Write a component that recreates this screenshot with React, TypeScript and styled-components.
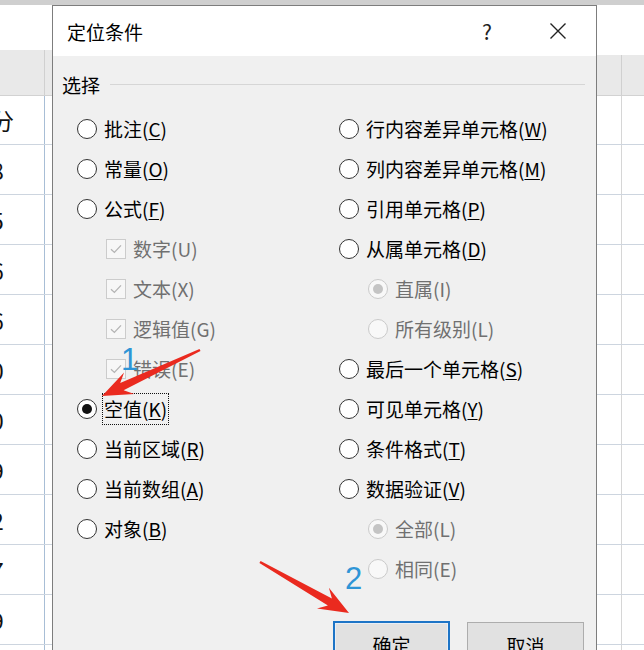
import React from 'react';
import styled, { createGlobalStyle } from 'styled-components';

const GlobalStyle = createGlobalStyle`
  html, body {
    margin: 0;
    padding: 0;
    background: #fff;
    overflow: hidden;
  }
  body {
    font-family: "Noto Sans CJK SC", "Noto Sans", sans-serif;
  }
`;

const Page = styled.div`
  position: relative;
  width: 644px;
  height: 650px;
  display: flex;
  flex-direction: column;
  overflow: hidden;
  background: #fff;
`;

const TopBar = styled.div`
  height: 5px;
  flex-shrink: 0;
  background: #cfcfcf;
`;

const Main = styled.div`
  flex: 1;
  display: flex;
  min-height: 0;
`;

/* ---------- spreadsheet strips ---------- */

const Sheet = styled.div<{ $width?: number }>`
  width: ${({ $width }) => ($width ? `${$width}px` : 'auto')};
  flex: ${({ $width }) => ($width ? '0 0 auto' : '1')};
  display: flex;
  flex-direction: column;
  overflow: hidden;
`;

const SheetBlank = styled.div<{ $h: number }>`
  height: ${({ $h }) => $h}px;
  flex-shrink: 0;
  background: #fff;
`;

const SheetRow = styled.div<{ $header?: boolean; $h: number }>`
  height: ${({ $h }) => $h}px;
  flex-shrink: 0;
  display: flex;
  background: ${({ $header }) => ($header ? '#e9e9e9' : '#fff')};
  border-bottom: 1px solid ${({ $header }) => ($header ? '#d2d2d2' : '#cdd5df')};
`;

const Cell = styled.div<{ $w?: number; $line?: string }>`
  width: ${({ $w }) => ($w ? `${$w}px` : 'auto')};
  flex: ${({ $w }) => ($w ? '0 0 auto' : '1')};
  border-right: ${({ $line }) => ($line ? `1px solid ${$line}` : 'none')};
  display: flex;
  align-items: center;
  overflow: hidden;
  font-family: "Noto Sans CJK SC", "Liberation Sans", sans-serif;
  font-size: 23px;
  color: #111;
`;

const CellText = styled.span`
  margin-left: -9px;
  white-space: nowrap;
`;

/* ---------- dialog ---------- */

const Dialog = styled.div`
  width: 545px;
  flex-shrink: 0;
  display: flex;
  flex-direction: column;
  box-sizing: border-box;
  border: 1px solid #7d7d7d;
  border-bottom: none;
  background: #f0f0f0;
  color: #000;
`;

const TitleBar = styled.div`
  height: 50px;
  flex-shrink: 0;
  display: flex;
  align-items: center;
  background: #fff;
  padding: 0 15px 0 14px;
`;

const Title = styled.div`
  flex: 1;
  font-size: 19px;
`;

const TitleButton = styled.div`
  width: 46px;
  height: 36px;
  display: flex;
  align-items: center;
  justify-content: center;
  font-size: 21px;
  color: #222;
  & + & {
    margin-left: 25px;
  }
`;

const Body = styled.div`
  flex: 1;
  display: flex;
  flex-direction: column;
  padding: 0 11px 0 9px;
`;

const GroupHeader = styled.div`
  height: 50px;
  padding-top: 3px;
  display: flex;
  align-items: center;
  gap: 10px;
  font-size: 19px;
`;

const GroupLine = styled.div`
  flex: 1;
  height: 1px;
  background: #d6d6d6;
`;

const Columns = styled.div`
  display: grid;
  grid-template-columns: 262px 1fr;
  padding-left: 15px;
`;

const OptionColumn = styled.div`
  display: flex;
  flex-direction: column;
`;

const OptionRow = styled.div<{ $sub?: boolean; $disabled?: boolean }>`
  height: 40px;
  display: flex;
  align-items: center;
  gap: 7px;
  padding-left: ${({ $sub }) => ($sub ? 29 : 0)}px;
  font-size: 19px;
  color: ${({ $disabled }) => ($disabled ? '#707070' : '#000')};
  white-space: nowrap;
`;

const Label = styled.span<{ $focused?: boolean }>`
  line-height: 28px;
  outline: ${({ $focused }) => ($focused ? '1px dotted #111' : 'none')};
  outline-offset: 1px;
`;

const Key = styled.span<{ $underline?: boolean }>`
  text-decoration: ${({ $underline }) => ($underline ? 'underline' : 'none')};
  text-underline-offset: 2px;
  text-decoration-thickness: 1px;
`;

const RadioCircle = styled.span<{ $checked?: boolean; $disabled?: boolean }>`
  width: 20px;
  height: 20px;
  box-sizing: border-box;
  flex-shrink: 0;
  border-radius: 50%;
  border: 1.5px solid ${({ $disabled }) => ($disabled ? '#cacaca' : '#333')};
  background: ${({ $disabled }) => ($disabled ? '#f8f8f8' : '#fff')};
  display: grid;
  place-items: center;

  &::after {
    content: '';
    width: 10px;
    height: 10px;
    border-radius: 50%;
    background: ${({ $disabled }) => ($disabled ? '#c4c4c4' : '#111')};
    display: ${({ $checked }) => ($checked ? 'block' : 'none')};
  }
`;

const CheckBox = styled.span`
  width: 20px;
  height: 20px;
  box-sizing: border-box;
  flex-shrink: 0;
  border: 1px solid #cccccc;
  background: #f7f7f7;
  display: grid;
  place-items: center;
  color: #b4b4b4;
`;

const ButtonRow = styled.div`
  display: flex;
  justify-content: flex-end;
  gap: 17px;
  margin-top: 32px;
  padding-right: 1px;
`;

const Button = styled.div<{ $primary?: boolean }>`
  width: 117px;
  height: 46px;
  box-sizing: border-box;
  display: flex;
  align-items: center;
  justify-content: center;
  font-size: 19px;
  background: #e1e1e1;
  border: ${({ $primary }) => ($primary ? '2px solid #1d74c6' : '1px solid #adadad')};
  box-shadow: ${({ $primary }) => ($primary ? 'inset 0 0 0 1px #e8eef5' : 'none')};
  margin-top: ${({ $primary }) => ($primary ? 0 : 1)}px;
`;

/* ---------- annotations ---------- */

const Overlay = styled.svg`
  position: absolute;
  left: 0;
  top: 0;
  pointer-events: none;
`;

const StepNumber = styled.span<{ $x: number; $y: number }>`
  position: absolute;
  left: ${({ $x }) => $x}px;
  top: ${({ $y }) => $y}px;
  font-family: "Liberation Sans", sans-serif;
  font-size: 31px;
  line-height: 1;
  color: #2f95d6;
  pointer-events: none;
`;

type Option = {
  label: string;
  key: string;
  kind: 'radio' | 'check';
  sub?: boolean;
  disabled?: boolean;
  checked?: boolean;
  focused?: boolean;
};

const leftOptions: Option[] = [
  { label: '批注', key: 'C', kind: 'radio' },
  { label: '常量', key: 'O', kind: 'radio' },
  { label: '公式', key: 'F', kind: 'radio' },
  { label: '数字', key: 'U', kind: 'check', sub: true, disabled: true },
  { label: '文本', key: 'X', kind: 'check', sub: true, disabled: true },
  { label: '逻辑值', key: 'G', kind: 'check', sub: true, disabled: true },
  { label: '错误', key: 'E', kind: 'check', sub: true, disabled: true },
  { label: '空值', key: 'K', kind: 'radio', checked: true, focused: true },
  { label: '当前区域', key: 'R', kind: 'radio' },
  { label: '当前数组', key: 'A', kind: 'radio' },
  { label: '对象', key: 'B', kind: 'radio' },
];

const rightOptions: Option[] = [
  { label: '行内容差异单元格', key: 'W', kind: 'radio' },
  { label: '列内容差异单元格', key: 'M', kind: 'radio' },
  { label: '引用单元格', key: 'P', kind: 'radio' },
  { label: '从属单元格', key: 'D', kind: 'radio' },
  { label: '直属', key: 'I', kind: 'radio', sub: true, disabled: true, checked: true },
  { label: '所有级别', key: 'L', kind: 'radio', sub: true, disabled: true },
  { label: '最后一个单元格', key: 'S', kind: 'radio' },
  { label: '可见单元格', key: 'Y', kind: 'radio' },
  { label: '条件格式', key: 'T', kind: 'radio' },
  { label: '数据验证', key: 'V', kind: 'radio' },
  { label: '全部', key: 'L', kind: 'radio', sub: true, disabled: true, checked: true },
  { label: '相同', key: 'E', kind: 'radio', sub: true, disabled: true },
];

const cellValues = ['分', '8', '5', '6', '6', '0', '0', '9', '2', '7', '9'];

// tapered arrow: thin tail widening into a swept head at the tip
function arrowPoints(tx: number, ty: number, px: number, py: number) {
  const dx = px - tx;
  const dy = py - ty;
  const len = Math.hypot(dx, dy);
  const ux = dx / len;
  const uy = dy / len;
  const nx = -uy;
  const ny = ux;
  const head = 30;
  const bx = px - ux * head;
  const by = py - uy * head;
  const sx = px - ux * (head - 8);
  const sy = py - uy * (head - 8);
  const pts: [number, number][] = [
    [tx + nx * 1.2, ty + ny * 1.2],
    [sx + nx * 4, sy + ny * 4],
    [bx + nx * 12, by + ny * 12],
    [px, py],
    [bx - nx * 12, by - ny * 12],
    [sx - nx * 4, sy - ny * 4],
    [tx - nx * 1.2, ty - ny * 1.2],
  ];
  return pts.map(([x, y]) => `${x.toFixed(1)},${y.toFixed(1)}`).join(' ');
}

function OptionItem({ opt }: { opt: Option }) {
  return (
    <OptionRow $sub={opt.sub} $disabled={opt.disabled}>
      {opt.kind === 'radio' ? (
        <RadioCircle $checked={opt.checked} $disabled={opt.disabled} />
      ) : (
        <CheckBox>
          <svg width="14" height="14" viewBox="0 0 14 14" fill="none">
            <path d="M2 7.2 L5.4 10.4 L12 3.4" stroke="currentColor" strokeWidth="1.3" />
          </svg>
        </CheckBox>
      )}
      <Label $focused={opt.focused}>
        {opt.label}(<Key $underline={!opt.disabled}>{opt.key}</Key>)
      </Label>
    </OptionRow>
  );
}

function SheetStrip({ width, colA, lineA, headerTop, values }: {
  width?: number;
  colA: number;
  lineA: string;
  headerTop: number;
  values?: string[];
}) {
  const rows = Array.from({ length: 12 }, (_, i) => i);
  return (
    <Sheet $width={width}>
      <SheetBlank $h={headerTop} />
      <SheetRow $header $h={95 - headerTop - 5 - 1 + 1 - 1 + 1}>
        <Cell $w={colA} $line="#d0d0d0" />
        <Cell />
      </SheetRow>
      {rows.map((i) => (
        <SheetRow key={i} $h={i === 0 ? 48 : 49}>
          <Cell $w={colA} $line={lineA}>
            {values && values[i] ? <CellText>{values[i]}</CellText> : null}
          </Cell>
          <Cell />
        </SheetRow>
      ))}
    </Sheet>
  );
}

export default function App() {
  return (
    <Page>
      <GlobalStyle />
      <TopBar />
      <Main>
        <SheetStrip width={52} colA={44} lineA="#a8bed6" headerTop={45} values={cellValues} />

        <Dialog>
          <TitleBar>
            <Title>定位条件</Title>
            <TitleButton>?</TitleButton>
            <TitleButton>
              <svg width="18" height="18" viewBox="0 0 18 18">
                <path d="M1.5 1.5 L16.5 16.5 M16.5 1.5 L1.5 16.5" stroke="#222" strokeWidth="1.4" />
              </svg>
            </TitleButton>
          </TitleBar>

          <Body>
            <GroupHeader>
              选择
              <GroupLine />
            </GroupHeader>

            <Columns>
              <OptionColumn>
                {leftOptions.map((o) => (
                  <OptionItem key={o.label} opt={o} />
                ))}
              </OptionColumn>
              <OptionColumn>
                {rightOptions.map((o) => (
                  <OptionItem key={o.label} opt={o} />
                ))}
              </OptionColumn>
            </Columns>

            <ButtonRow>
              <Button $primary>确定</Button>
              <Button>取消</Button>
            </ButtonRow>
          </Body>
        </Dialog>

        <SheetStrip colA={24} lineA="#d6d6d6" headerTop={50} />
      </Main>

      <Overlay width={644} height={650} viewBox="0 0 644 650">
        <polygon points={arrowPoints(200, 350, 102, 396)} fill="#ea2a1f" />
        <polygon points={arrowPoints(260, 562, 349, 613)} fill="#ea2a1f" />
      </Overlay>
      <StepNumber $x={121} $y={344}>1</StepNumber>
      <StepNumber $x={345} $y={563}>2</StepNumber>
    </Page>
  );
}
